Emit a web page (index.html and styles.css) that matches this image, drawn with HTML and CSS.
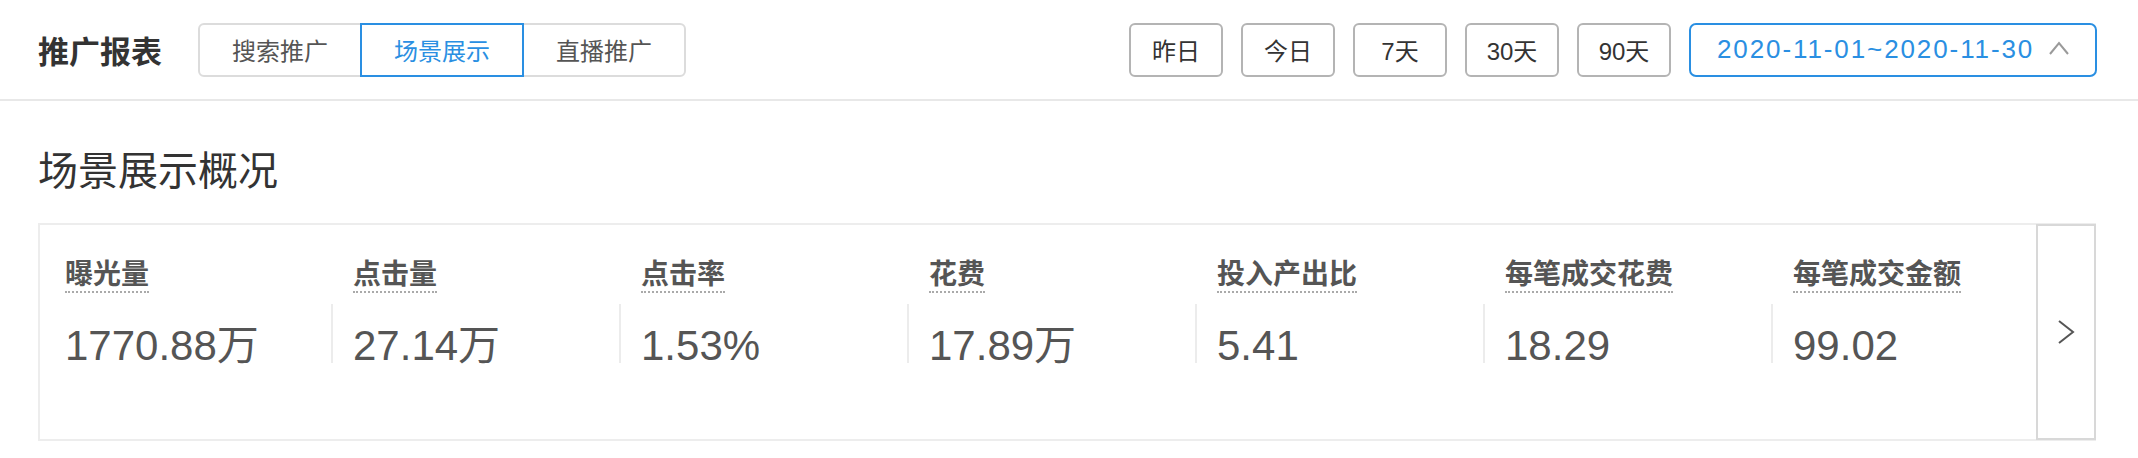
FILE: index.html
```html
<!DOCTYPE html>
<html lang="zh-CN">
<head>
<meta charset="utf-8">
<title>推广报表</title>
<link rel="stylesheet" href="styles.css">
</head>
<body>
<div class="page">
  <header class="topbar">
    <div class="topbar-left">
      <h1 class="title">推广报表</h1>
      <div class="tabs">
        <button class="tab">搜索推广</button>
        <button class="tab active">场景展示</button>
        <button class="tab">直播推广</button>
      </div>
    </div>
    <div class="topbar-right">
      <button class="range-btn">昨日</button>
      <button class="range-btn">今日</button>
      <button class="range-btn">7天</button>
      <button class="range-btn">30天</button>
      <button class="range-btn">90天</button>
      <button class="date-btn">
        <span class="date-text">2020-11-01~2020-11-30</span>
        <svg class="date-chevron" width="20" height="14" viewBox="0 0 20 14"><polyline points="1,13 10,2 19,13" fill="none" stroke="#9a9a9a" stroke-width="2"/></svg>
      </button>
    </div>
  </header>

  <section class="overview">
    <h2 class="section-title">场景展示概况</h2>
    <div class="card">
      <div class="metrics">
        <div class="metric first">
          <span class="metric-label">曝光量</span>
          <div class="metric-value-wrap"><span class="metric-value">1770.88万</span></div>
        </div>
        <div class="metric">
          <span class="metric-label">点击量</span>
          <div class="metric-value-wrap"><span class="metric-value">27.14万</span></div>
        </div>
        <div class="metric">
          <span class="metric-label">点击率</span>
          <div class="metric-value-wrap"><span class="metric-value">1.53%</span></div>
        </div>
        <div class="metric">
          <span class="metric-label">花费</span>
          <div class="metric-value-wrap"><span class="metric-value">17.89万</span></div>
        </div>
        <div class="metric">
          <span class="metric-label">投入产出比</span>
          <div class="metric-value-wrap"><span class="metric-value">5.41</span></div>
        </div>
        <div class="metric">
          <span class="metric-label">每笔成交花费</span>
          <div class="metric-value-wrap"><span class="metric-value">18.29</span></div>
        </div>
        <div class="metric">
          <span class="metric-label">每笔成交金额</span>
          <div class="metric-value-wrap"><span class="metric-value">99.02</span></div>
        </div>
      </div>
      <button class="next-btn" aria-label="下一页">
        <svg width="18" height="26" viewBox="0 0 18 26"><polyline points="2,2 16,13 2,24" fill="none" stroke="#555" stroke-width="2"/></svg>
      </button>
    </div>
  </section>
</div>
</body>
</html>
```

FILE: styles.css
```css
* { box-sizing: border-box; }

body {
  margin: 0;
  background: #fff;
  font-family: "Liberation Sans", "Noto Sans CJK SC", sans-serif;
  color: #333;
}

button {
  font-family: inherit;
  background: #fff;
  cursor: pointer;
  padding: 0;
}

.topbar {
  height: 101px;
  display: flex;
  align-items: center;
  justify-content: space-between;
  padding: 0 41px 0 38px;
  border-bottom: 2px solid #e8e8e8;
}

.topbar-left {
  display: flex;
  align-items: center;
  gap: 36px;
}

.title {
  margin: 0;
  font-size: 31px;
  font-weight: 700;
  color: #333;
  font-family: "Noto Sans CJK SC", sans-serif;
  line-height: 1;
}

.tabs {
  display: flex;
}

.tab {
  width: 164px;
  height: 54px;
  border: 2px solid #dcdcdc;
  margin-left: -2px;
  font-size: 24px;
  color: #555;
  font-family: "Noto Sans CJK SC", sans-serif;
  position: relative;
}

.tab:first-child {
  margin-left: 0;
  border-radius: 6px 0 0 6px;
}

.tab:last-child {
  border-radius: 0 6px 6px 0;
}

.tab.active {
  border-color: #2a8fe2;
  color: #2a8fe2;
  z-index: 1;
}

.topbar-right {
  display: flex;
  align-items: center;
  gap: 18px;
}

.range-btn {
  width: 94px;
  height: 54px;
  border: 2px solid #b4b4b4;
  border-radius: 6px;
  font-size: 24px;
  color: #333;
}

.date-btn {
  width: 408px;
  height: 54px;
  border: 2px solid #2a8fe2;
  border-radius: 7px;
  display: flex;
  align-items: center;
  padding-left: 26px;
  gap: 15px;
}

.date-text {
  font-size: 26px;
  letter-spacing: 1.9px;
  color: #2a8fe2;
}

.date-chevron {
  display: block;
  margin-bottom: 4px;
}

.overview {
  padding: 0 42px 0 38px;
}

.section-title {
  margin: 44px 0 32px;
  font-size: 40px;
  line-height: 46px;
  font-weight: 400;
  color: #333;
  font-family: "Noto Sans CJK SC", sans-serif;
}

.card {
  display: flex;
  height: 218px;
  border: 2px solid #ededed;
}

.metrics {
  flex: 1;
  min-width: 0;
  display: flex;
  overflow: hidden;
}

.metric {
  flex: 0 0 288px;
  padding: 30px 0 0 25px;
  display: flex;
  flex-direction: column;
  align-items: flex-start;
}

.metric-label {
  font-family: "Noto Sans CJK SC", sans-serif;
  font-size: 28px;
  line-height: 34px;
  font-weight: 600;
  color: #555;
  padding-bottom: 2px;
  border-bottom: 2px dotted #aaa;
}

.metric-value-wrap {
  margin: 11px 0 0 -22px;
  padding: 25px 0 0 20px;
  border-left: 2px solid #ececec;
}

.metric.first .metric-value-wrap {
  border-left-color: transparent;
}

.metric-value {
  display: block;
  font-size: 42px;
  line-height: 34px;
  color: #555;
  white-space: nowrap;
}

.next-btn {
  flex: 0 0 60px;
  margin: -1px -2px -1px 0;
  border: 2px solid #d8d8d8;
  display: flex;
  align-items: center;
  justify-content: center;
}

.next-btn svg {
  display: block;
}
```
